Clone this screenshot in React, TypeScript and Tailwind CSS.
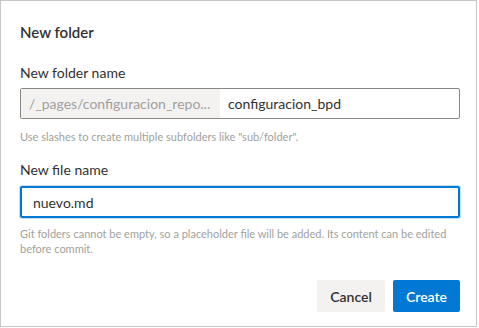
export default function App() {
  return (
    <div className="w-[479px] h-[328px] bg-white font-['Lato',sans-serif] text-[#323130]">
      <div className="w-[477px] h-[327px] border border-[#c8c6c4] bg-white flex flex-col pl-[19px] pr-[16px]">
        <h2 className="mt-[20px] text-[15px] leading-[22px] font-semibold">New folder</h2>

        <label className="mt-[20px] text-[14px] leading-[20px]">New folder name</label>
        <div className="mt-[5px] flex h-[31px] w-full border border-[#8a8886] rounded-[2px]">
          <div className="w-[199px] bg-[#f3f2f1] text-[#a19f9d] text-[14px] px-[8px] flex items-center truncate">
            /_pages/configuracion_repo...
          </div>
          <div className="flex-1 px-[8px] flex items-center text-[14px]">configuracion_bpd</div>
        </div>
        <p className="mt-[10px] text-[11px] leading-[15px] text-[#a19f9d]">
          Use slashes to create multiple subfolders like "sub/folder".
        </p>

        <label className="mt-[16px] text-[14px] leading-[20px]">New file name</label>
        <div className="mt-[6px] h-[32px] w-full border-2 border-[#0078d4] rounded-[2px] ring-1 ring-[#c7e0f4] flex items-center px-[11px] text-[14px]">
          nuevo.md
        </div>
        <p className="mt-[8px] text-[11px] leading-[15px] text-[#a19f9d]">
          Git folders cannot be empty, so a placeholder file will be added. Its content can be edited before commit.
        </p>

        <div className="mt-auto mb-[14px] flex justify-end gap-[8px]">
          <button className="h-[32px] w-[68px] rounded-[2px] bg-[#f3f2f1] text-[14px] font-semibold">Cancel</button>
          <button className="h-[32px] w-[67px] rounded-[2px] bg-[#0078d4] text-white text-[14px] font-semibold">Create</button>
        </div>
      </div>
    </div>
  );
}
